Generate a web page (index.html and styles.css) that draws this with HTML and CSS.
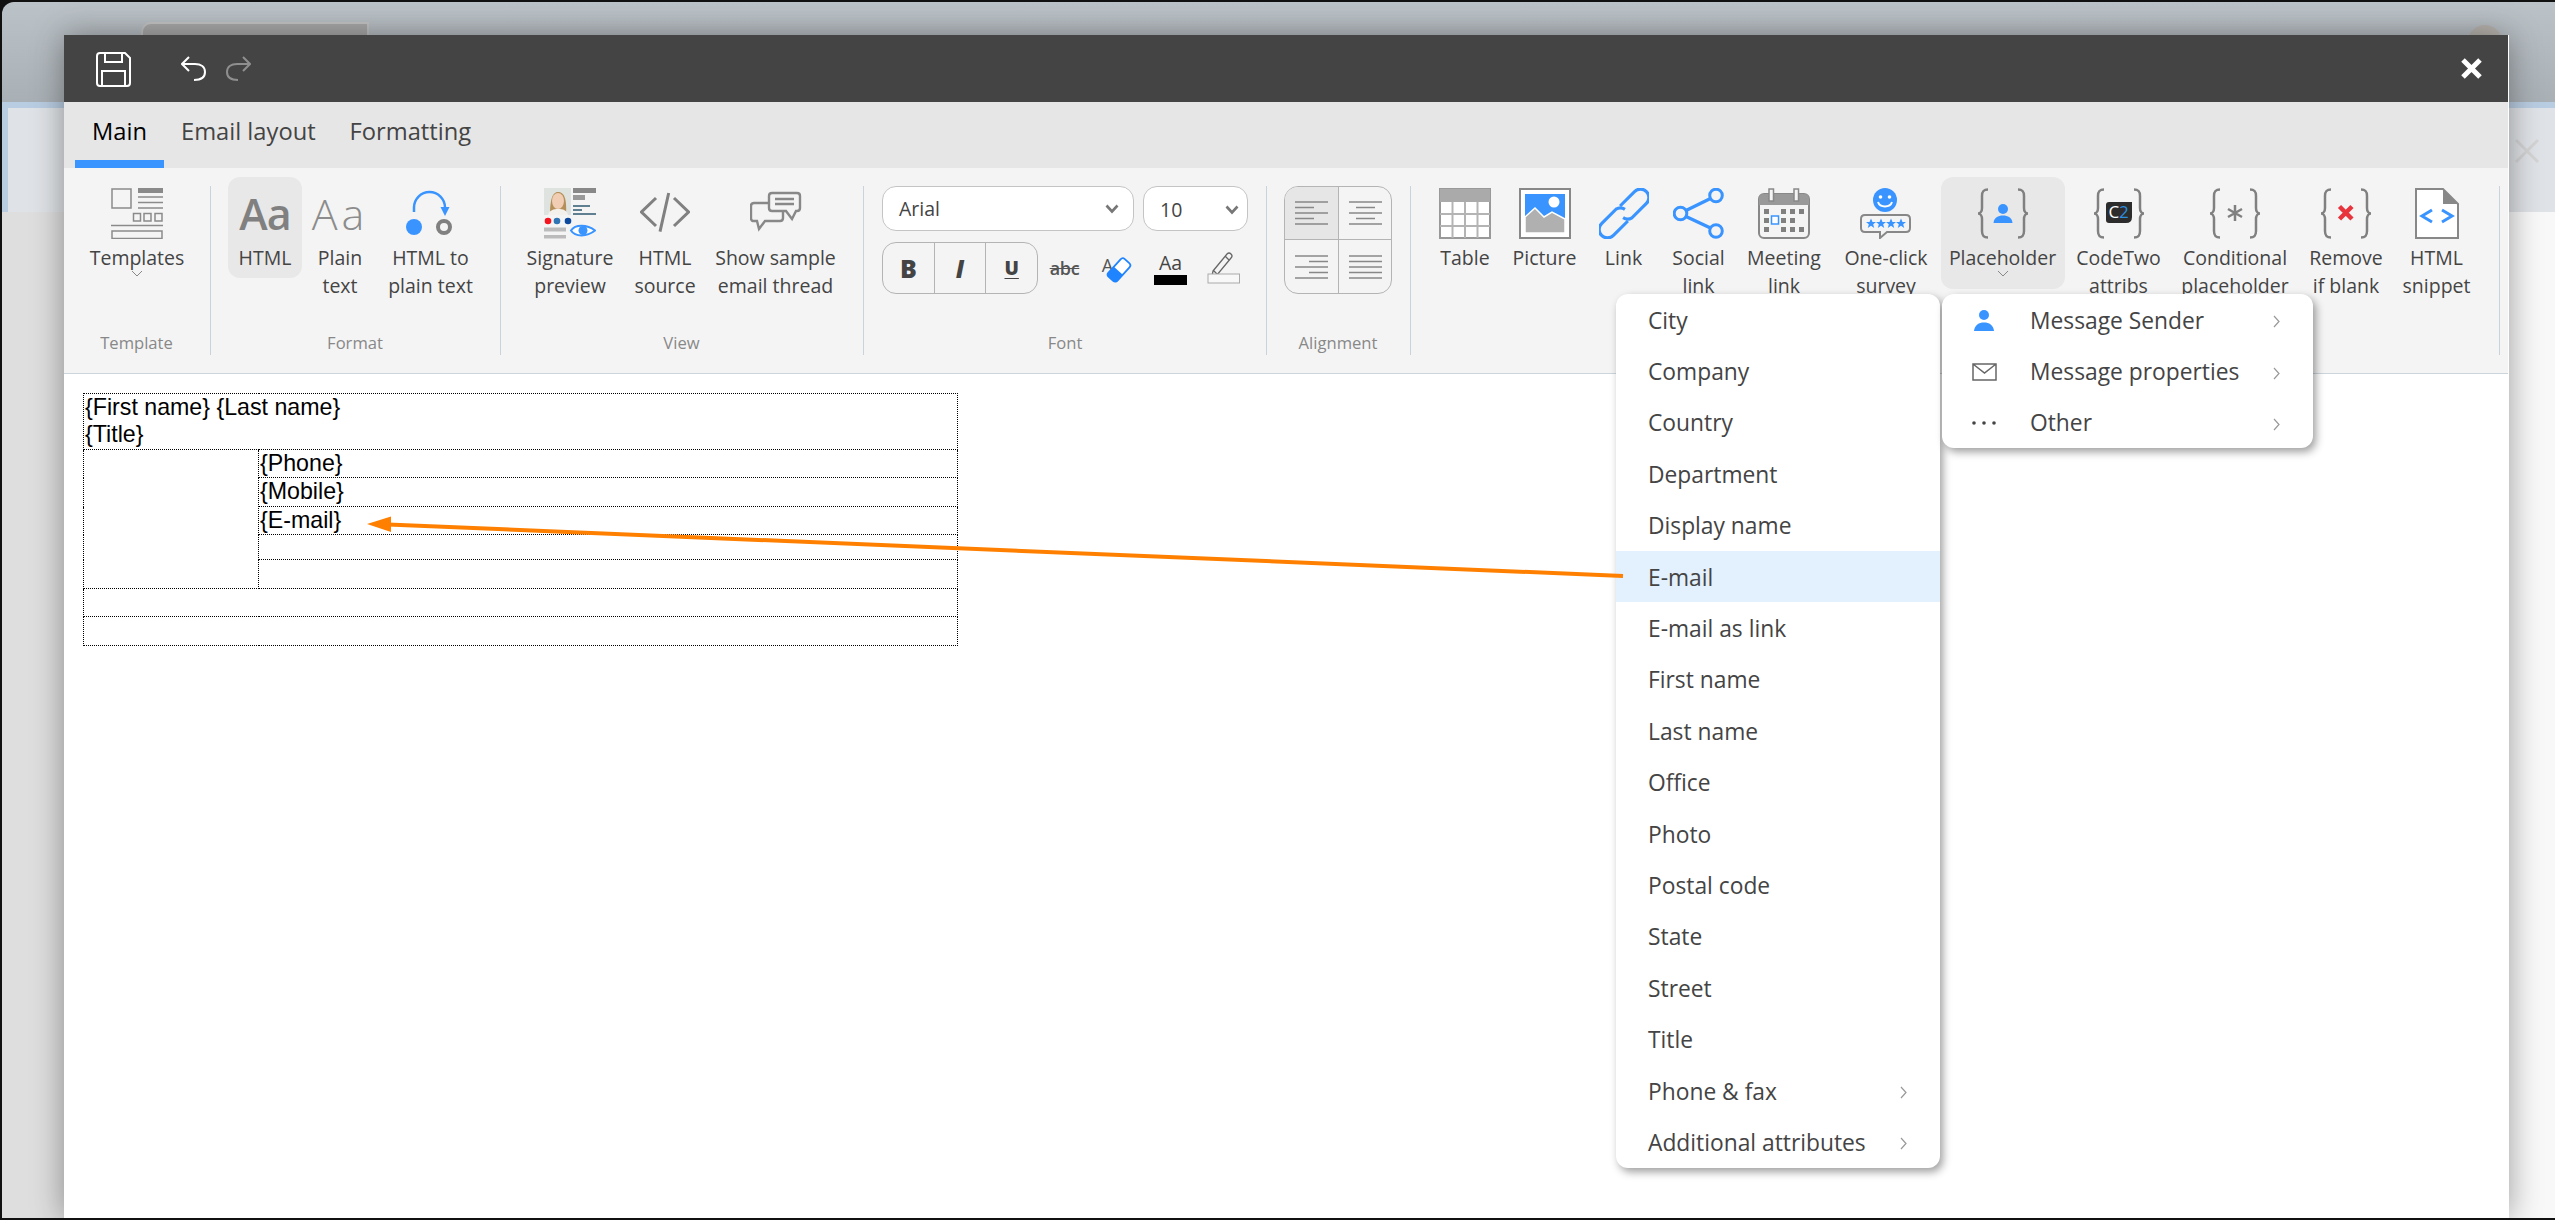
FILE: index.html
```html
<!DOCTYPE html>
<html lang="en">
<head>
<meta charset="utf-8">
<title>Signature editor</title>
<link rel="stylesheet" href="styles.css">
</head>
<body>
<div class="desktop">
  <div class="bg-tab"></div>
  <div class="bg-avatar"></div>
  <svg class="bg-close" width="26" height="26" viewBox="0 0 26 26"><path d="M2 2L24 24M24 2L2 24"/></svg>
  <main class="dialog">
    <header class="titlebar">
      <svg class="ic-save" width="35" height="35" viewBox="0 0 35 35"><path class="st-white" d="M4 1H29L34 6V31Q34 34 31 34H4Q1 34 1 31V4Q1 1 4 1ZM9 1V10H26V1M6 34V19H29V34"/></svg>
      <svg class="ic-undo" width="25" height="25" viewBox="0 0 25 25"><path class="st-white" d="M8 1L1 8L8 15M1 8H14C20 8 24 11 24 16C24 21 20 24 13 24"/></svg>
      <svg class="ic-redo" width="25" height="25" viewBox="0 0 25 25"><path class="st-dim" d="M17 1L24 8L17 15M24 8H11C5 8 1 11 1 16C1 21 5 24 12 24"/></svg>
      <svg class="ic-close" width="21" height="21" viewBox="0 0 21 21"><path d="M2 2L19 19M19 2L2 19"/></svg>
    </header>
    <nav class="tabs">
      <div class="tab tab-active">Main</div>
      <div class="tab">Email layout</div>
      <div class="tab">Formatting</div>
    </nav>
    <section class="ribbon">
      <div class="group g-template">
        <div class="items">
          <div class="item w146">
            <svg class="icon" width="52" height="51" viewBox="0 0 52 51"><g class="gl"><rect x="1" y="1" width="19" height="19"/><path d="M27 9H52M27 14.500H52M27 20H52M0 37.500H52"/><rect x="22.500" y="25.500" width="7" height="7.500"/><rect x="33" y="25.500" width="7" height="7.500"/><rect x="44" y="25.500" width="7" height="7.500"/><rect x="1" y="43" width="50" height="7.500"/></g><rect x="27" y="0" width="25" height="5" class="fl"/></svg>
            <div class="lbl">Templates</div>
            <svg class="chev" width="12" height="7" viewBox="0 0 12 7"><path d="M1 1L6 6L11 1"/></svg>
          </div>
        </div>
        <div class="gname">Template</div>
      </div>
      <div class="group g-format">
        <div class="items">
          <div class="item w74 active h-html"><div class="icon aa aa-bold">Aa</div><div class="lbl">HTML</div></div>
          <div class="item w76"><div class="icon aa aa-thin">Aa</div><div class="lbl">Plain<br>text</div></div>
          <div class="item w105">
            <svg class="icon" width="50" height="51" viewBox="0 0 50 51"><path class="st-blue" d="M8 24V19.500A15.500 15.500 0 0 1 39 19.500V22"/><path class="fb" d="M34.500 19H43.500L39 28Z"/><circle class="fb" cx="8" cy="39" r="8"/><circle class="ring" cx="38" cy="39" r="6"/></svg>
            <div class="lbl">HTML to<br>plain text</div>
          </div>
        </div>
        <div class="gname">Format</div>
      </div>
      <div class="group g-view">
        <div class="items">
          <div class="item w104">
            <svg class="icon" width="52" height="51" viewBox="0 0 52 51">
              <rect x="0" y="0" width="27" height="27" fill="#dfe3df"/>
              <path d="M6 27C6 10 9 4 14 4C20 4 23 10 22 27Z" fill="#b48f58"/>
              <ellipse cx="14" cy="13" rx="6" ry="8" fill="#f1cdb3"/>
              <path d="M4 27C5 22 10 21 14 21C19 21 23 22 24 27Z" fill="#f4f0ec"/>
              <rect x="29" y="0" width="23" height="5" fill="#888"/>
              <rect x="29" y="7" width="12" height="5" fill="#999"/>
              <path d="M29 18H46M29 22H38M29 26H52" stroke="#2d5a70" stroke-width="1.500"/>
              <circle cx="4" cy="33" r="3.300" fill="#f5141e"/><circle cx="13" cy="33" r="3.300" fill="#2f74b5"/><circle cx="24" cy="33" r="3.300" fill="#0d4a9e"/>
              <rect x="0" y="39.500" width="22" height="4" fill="#bbb"/><rect x="0" y="47" width="22" height="3.500" fill="#bbb"/>
              <path d="M27 42.500C31 36 43 36 51 42.500C43 49 31 49 27 42.500Z" fill="#fff" stroke="#3a94ff" stroke-width="2"/>
              <circle cx="39" cy="42.500" r="4.500" fill="#3a94ff"/>
            </svg>
            <div class="lbl">Signature<br>preview</div>
          </div>
          <div class="item w86">
            <svg class="icon" width="50" height="51" viewBox="0 0 50 51"><path class="st-g3" d="M16 10L1.500 24L16 38M34 10L48.500 24L34 38M28.700 5L20 43.700"/></svg>
            <div class="lbl">HTML<br>source</div>
          </div>
          <div class="item w135">
            <svg class="icon" width="52" height="51" viewBox="0 0 52 51"><path class="st-g2" d="M4 15H30Q33 15 33 18V30Q33 33 30 33H15L9 41L7 33H4Q1 33 1 30V18Q1 15 4 15Z"/><path class="bubble" d="M22 5H47Q50 5 50 8V20Q50 23 47 23H46L42 31L36 23H22Q19 23 19 20V8Q19 5 22 5Z"/><path class="st-g2" d="M25 11H44M25 16H44"/></svg>
            <div class="lbl">Show sample<br>email thread</div>
          </div>
        </div>
        <div class="gname">View</div>
      </div>
      <div class="group g-font">
        <div class="font-rows">
          <div class="font-row1">
            <div class="sel sel-font"><span>Arial</span><svg width="14" height="10" viewBox="0 0 14 10"><path d="M1.500 1.500L7 7.500L12.500 1.500"/></svg></div>
            <div class="sel sel-size"><span>10</span><svg width="14" height="10" viewBox="0 0 14 10"><path d="M1.500 1.500L7 7.500L12.500 1.500"/></svg></div>
          </div>
          <div class="font-row2">
            <div class="biu">
              <div class="biu-c biu-b">B</div>
              <div class="biu-c biu-i">I</div>
              <div class="biu-c biu-u">U</div>
            </div>
            <div class="tool"><span class="abc">abc</span></div>
            <div class="tool tool-a">
              <span class="a-small">A</span>
              <svg width="28" height="28" viewBox="0 0 28 28"><g transform="rotate(-48 14 14)"><rect x="2" y="8" width="24" height="12" rx="3" fill="#fff" stroke="#1f84ff" stroke-width="1.800"/><path d="M5 8H13V20H5Q2 20 2 17V11Q2 8 5 8Z" fill="#1f84ff"/></g></svg>
            </div>
            <div class="tool tool-stack"><span class="aa-color">Aa</span><span class="bar-black"></span></div>
            <div class="tool">
              <svg width="34" height="32" viewBox="0 0 34 32"><path class="pen" d="M6 19L20 2Q22 0 24 2Q26 4 24 6L10 23L5 24Z M18 4L22 8M7 19L10 22"/><rect class="pen-box" x="1" y="22" width="31.500" height="9"/></svg>
            </div>
          </div>
        </div>
        <div class="gname">Font</div>
      </div>
      <div class="group g-align">
        <div class="align-grid">
          <div class="align-c align-on"><svg width="33" height="24" viewBox="0 0 33 24"><path d="M0 1H33M0 6.500H19M0 12H33M0 17.500H19M0 23H33"/></svg></div>
          <div class="align-c"><svg width="33" height="24" viewBox="0 0 33 24"><path d="M0 1H33M7 6.500H26M0 12H33M7 17.500H26M0 23H33"/></svg></div>
          <div class="align-c"><svg width="33" height="24" viewBox="0 0 33 24"><path d="M0 1H33M14 6.500H33M0 12H33M14 17.500H33M0 23H33"/></svg></div>
          <div class="align-c"><svg width="33" height="24" viewBox="0 0 33 24"><path d="M0 1H33M0 6.500H33M0 12H33M0 17.500H33M0 23H33"/></svg></div>
        </div>
        <div class="gname">Alignment</div>
      </div>
      <div class="group g-insert">
        <div class="items">
          <div class="item w80">
            <svg class="icon" width="52" height="51" viewBox="0 0 52 51"><rect x="1" y="1" width="50" height="49" fill="#fff" stroke="#999" stroke-width="2"/><rect x="1" y="1" width="50" height="13" fill="#aaa"/><path d="M13.500 14V50M26 14V50M38.500 14V50M1 26H51M1 38H51" stroke="#b4b4b4" stroke-width="2"/></svg>
            <div class="lbl">Table</div>
          </div>
          <div class="item w79">
            <svg class="icon" width="52" height="51" viewBox="0 0 52 51"><rect x="1" y="1" width="50" height="49" fill="#fff" stroke="#888" stroke-width="2"/><rect x="6" y="6" width="40" height="39" fill="#3a94ff"/><path d="M6 45V29L16 20L25 29L33 24L46 31V45Z" fill="#b0b0b0" stroke="#fff" stroke-width="1.500"/><circle cx="35" cy="14" r="5.500" fill="#fff"/></svg>
            <div class="lbl">Picture</div>
          </div>
          <div class="item w79">
            <svg class="icon" width="50" height="51" viewBox="-2 -2 54 55"><path class="st-link" d="M20.800 17.400L36.400 1.800A9 9 0 0 1 49.200 14.600L33.600 30.200A9 9 0 0 1 24 30"/><path class="st-link" d="M29.200 33.600L13.600 49.200A9 9 0 0 1 .8 36.400L16.400 20.800A9 9 0 0 1 26 21"/></svg>
            <div class="lbl">Link</div>
          </div>
          <div class="item w71">
            <svg class="icon" width="51" height="51" viewBox="0 0 51 51"><path class="st-link" d="M13 22.500L37.500 10.500M13 28.500L37.500 40"/><circle class="ring-b" cx="43" cy="7.500" r="6.300"/><circle class="ring-b" cx="7.500" cy="25.500" r="6.300"/><circle class="ring-b" cx="43" cy="43" r="6.300"/></svg>
            <div class="lbl">Social<br>link</div>
          </div>
          <div class="item w100">
            <svg class="icon" width="52" height="51" viewBox="0 0 52 51"><rect x="1" y="6" width="50" height="44" rx="5" fill="#f4f4f4" stroke="#888" stroke-width="2"/><path d="M6 6H46Q51 6 51 11V17H1V11Q1 6 6 6Z" fill="#999"/><rect x="11" y="1" width="4.500" height="12" fill="#f4f4f4" stroke="#888" stroke-width="1.500"/><rect x="36" y="1" width="4.500" height="12" fill="#f4f4f4" stroke="#888" stroke-width="1.500"/><g class="fg"><rect x="6" y="21" width="5" height="5"/><rect x="23" y="21" width="5" height="5"/><rect x="32" y="21" width="5" height="5"/><rect x="41" y="21" width="5" height="5"/><rect x="6" y="30" width="5" height="5"/><rect x="23" y="30" width="5" height="5"/><rect x="32" y="30" width="5" height="5"/><rect x="6" y="39" width="5" height="5"/><rect x="23" y="39" width="5" height="5"/><rect x="32" y="39" width="5" height="5"/><rect x="41" y="39" width="5" height="5"/></g><rect x="13.500" y="28" width="7" height="8" fill="#fff" stroke="#3a94ff" stroke-width="1.500"/></svg>
            <div class="lbl">Meeting<br>link</div>
          </div>
          <div class="item w104">
            <svg class="icon" width="52" height="51" viewBox="0 0 52 51"><circle cx="25" cy="12" r="12" fill="#3a94ff"/><circle cx="20.500" cy="9" r="1.800" fill="#fff"/><circle cx="29.500" cy="9" r="1.800" fill="#fff"/><path d="M18 14C20 20 30 20 32 14" fill="none" stroke="#fff" stroke-width="2"/><path d="M5 27H46Q50 27 50 31V40Q50 44 46 44H27L20 50V44H5Q1 44 1 40V31Q1 27 5 27Z" fill="#f4f4f4" stroke="#888" stroke-width="2"/><path class="fb" d="M11 30.500L12.500 34H16L13.200 36.200L14.200 40L11 37.800L7.800 40L8.800 36.200L6 34H9.500Z"/><path class="fb" d="M21 30.500L22.500 34H26L23.200 36.200L24.200 40L21 37.800L17.800 40L18.800 36.200L16 34H19.500Z"/><path class="fb" d="M31 30.500L32.500 34H36L33.200 36.200L34.200 40L31 37.800L27.800 40L28.800 36.200L26 34H29.500Z"/><path class="fb" d="M41 30.500L42.500 34H46L43.200 36.200L44.200 40L41 37.800L37.800 40L38.800 36.200L36 34H39.500Z"/></svg>
            <div class="lbl">One-click<br>survey</div>
          </div>
          <div class="item w124 active h-ph">
            <svg class="icon" width="52" height="51" viewBox="0 0 52 51"><path class="st-brace" d="M11 1.500C6 1.500 5 4 5 8V20C5 23 3.500 25.500 1 25.500C3.500 25.500 5 28 5 31V43C5 47 6 49.500 11 49.500M41 1.500C46 1.500 47 4 47 8V20C47 23 48.500 25.500 51 25.500C48.500 25.500 47 28 47 31V43C47 47 46 49.500 41 49.500"/><circle class="fb" cx="26" cy="21" r="5"/><path class="fb" d="M16.500 35C17 29.500 21 27.500 26 27.500C31 27.500 35 29.500 35.500 35Z"/></svg>
            <div class="lbl">Placeholder</div>
            <svg class="chev" width="12" height="7" viewBox="0 0 12 7"><path d="M1 1L6 6L11 1"/></svg>
          </div>
          <div class="item w108">
            <svg class="icon" width="52" height="51" viewBox="0 0 52 51"><path class="st-brace" d="M11 1.500C6 1.500 5 4 5 8V20C5 23 3.500 25.500 1 25.500C3.500 25.500 5 28 5 31V43C5 47 6 49.500 11 49.500M41 1.500C46 1.500 47 4 47 8V20C47 23 48.500 25.500 51 25.500C48.500 25.500 47 28 47 31V43C47 47 46 49.500 41 49.500"/><path d="M16 14H39V29Q39 35 33 35H16Q13 35 13 32V17Q13 14 16 14Z" fill="#2c2c2c"/><text x="15.500" y="30" class="c2-c">C</text><text x="26" y="30" class="c2-2">2</text></svg>
            <div class="lbl">CodeTwo<br>attribs</div>
          </div>
          <div class="item w125">
            <svg class="icon" width="52" height="51" viewBox="0 0 52 51"><path class="st-brace" d="M11 1.500C6 1.500 5 4 5 8V20C5 23 3.500 25.500 1 25.500C3.500 25.500 5 28 5 31V43C5 47 6 49.500 11 49.500M41 1.500C46 1.500 47 4 47 8V20C47 23 48.500 25.500 51 25.500C48.500 25.500 47 28 47 31V43C47 47 46 49.500 41 49.500"/><path class="st-brace" d="M26 17V33M19 21L33 29M33 21L19 29"/></svg>
            <div class="lbl">Conditional<br>placeholder</div>
          </div>
          <div class="item w97">
            <svg class="icon" width="52" height="51" viewBox="0 0 52 51"><path class="st-brace" d="M11 1.500C6 1.500 5 4 5 8V20C5 23 3.500 25.500 1 25.500C3.500 25.500 5 28 5 31V43C5 47 6 49.500 11 49.500M41 1.500C46 1.500 47 4 47 8V20C47 23 48.500 25.500 51 25.500C48.500 25.500 47 28 47 31V43C47 47 46 49.500 41 49.500"/><path class="st-red" d="M19.500 18.500L32 31M32 18.500L19.500 31"/></svg>
            <div class="lbl">Remove<br>if blank</div>
          </div>
          <div class="item w84">
            <svg class="icon" width="44" height="51" viewBox="0 0 44 51"><path d="M1 1H28L43 16V50H1Z" fill="#fff" stroke="#888" stroke-width="2"/><path d="M28 1L43 16H28Z" fill="#888"/><path class="st-blue3" d="M17 22L7 28L17 34M27 22L37 28L27 34"/></svg>
            <div class="lbl">HTML<br>snippet</div>
          </div>
        </div>
      </div>
    </section>
    <section class="canvas">
      <table class="sig">
        <colgroup><col class="col-l"><col class="col-r"></colgroup>
        <tr class="r56"><td colspan="2">{First name} {Last name}<br>{Title}</td></tr>
        <tr class="r28"><td rowspan="5"></td><td>{Phone}</td></tr>
        <tr class="r29"><td>{Mobile}</td></tr>
        <tr class="r28"><td>{E-mail}</td></tr>
        <tr class="r25"><td></td></tr>
        <tr class="r29"><td></td></tr>
        <tr class="r28"><td colspan="2"></td></tr>
        <tr class="r29"><td colspan="2"></td></tr>
      </table>
    </section>
  </main>
</div>

<div class="menu menu-attrs">
  <div class="mi">City</div>
  <div class="mi">Company</div>
  <div class="mi">Country</div>
  <div class="mi">Department</div>
  <div class="mi">Display name</div>
  <div class="mi mi-on">E-mail</div>
  <div class="mi">E-mail as link</div>
  <div class="mi">First name</div>
  <div class="mi">Last name</div>
  <div class="mi">Office</div>
  <div class="mi">Photo</div>
  <div class="mi">Postal code</div>
  <div class="mi">State</div>
  <div class="mi">Street</div>
  <div class="mi">Title</div>
  <div class="mi">Phone &amp; fax<svg class="mi-arrow" width="7" height="13" viewBox="0 0 7 13"><path d="M1 1L6 6.500L1 12"/></svg></div>
  <div class="mi">Additional attributes<svg class="mi-arrow" width="7" height="13" viewBox="0 0 7 13"><path d="M1 1L6 6.500L1 12"/></svg></div>
</div>

<div class="menu menu-root">
  <div class="mi mi-icon">
    <span class="mi-ic"><svg width="22" height="22" viewBox="0 0 22 22"><circle class="fb" cx="11" cy="6" r="5"/><path class="fb" d="M1 22C1.500 16 6 13.500 11 13.500C16 13.500 20.500 16 21 22Z"/></svg></span>
    Message Sender<svg class="mi-arrow" width="7" height="13" viewBox="0 0 7 13"><path d="M1 1L6 6.500L1 12"/></svg>
  </div>
  <div class="mi mi-icon">
    <span class="mi-ic"><svg width="25" height="18" viewBox="0 0 25 18"><path class="mail" d="M1 1H24V17H1ZM1 1L12.500 10L24 1"/></svg></span>
    Message properties<svg class="mi-arrow" width="7" height="13" viewBox="0 0 7 13"><path d="M1 1L6 6.500L1 12"/></svg>
  </div>
  <div class="mi mi-icon">
    <span class="mi-ic"><svg width="24" height="4" viewBox="0 0 24 4"><circle cx="2" cy="2" r="1.800" fill="#444"/><circle cx="12" cy="2" r="1.800" fill="#444"/><circle cx="22" cy="2" r="1.800" fill="#444"/></svg></span>
    Other<svg class="mi-arrow" width="7" height="13" viewBox="0 0 7 13"><path d="M1 1L6 6.500L1 12"/></svg>
  </div>
</div>

<svg class="arrow" width="2555" height="1220" viewBox="0 0 2555 1220"><path d="M1623 576L388 524.500" stroke="#ff8000" stroke-width="4" fill="none"/><path d="M367 524L391 516.500V532Z" fill="#ff8000"/></svg>
</body>
</html>
```
FILE: styles.css
```css
* { box-sizing: border-box; }
html, body { margin: 0; padding: 0; }
body {
  position: relative;
  width: 2555px;
  height: 1220px;
  overflow: hidden;
  background: #111;
  font-family: "Open Sans", "Noto Sans", sans-serif;
  color: #444;
}

/* backdrop */
.desktop {
  position: relative;
  margin: 2px 0 0 2px;
  height: 1216px;
  display: flex;
  padding: 33px 46px 0 62px;
  border-radius: 12px 0 0 0;
  overflow: hidden;
  background:
    linear-gradient(#bcc3c8, #a9b0b5) 0 0 / 100% 100px no-repeat,
    linear-gradient(#b9cde2, #b9cde2) 0 100px / 100% 6px no-repeat,
    linear-gradient(90deg, #b9cde2 0 6px, #dfe2e6 6px) 0 106px / 100% 104px no-repeat,
    linear-gradient(90deg, #dedede 0 1280px, #f8f8f8 1280px);
}
.bg-tab {
  position: absolute;
  left: 139px;
  top: 20px;
  width: 228px;
  height: 30px;
  background: #a9a9a9;
  border: 2px solid #c4c4c4;
  border-radius: 10px 0 0 0;
}
.bg-avatar {
  position: absolute;
  left: 2466px;
  top: 23px;
  width: 34px;
  height: 34px;
  border-radius: 50%;
  background: #b8b3ae;
}
.bg-close {
  position: absolute;
  left: 2512px;
  top: 136px;
}
.bg-close path { stroke: #d4d4d4; stroke-width: 3; fill: none; }

/* dialog */
.dialog {
  flex: 1;
  min-width: 0;
  display: flex;
  flex-direction: column;
  background: #fff;
  border-right: 1px solid #fff;
  box-shadow: 0 0 30px rgba(0, 0, 0, .38);
  position: relative;
}
.titlebar {
  height: 67px;
  flex: none;
  display: flex;
  align-items: center;
  background: #444;
  padding: 0 26px 0 32px;
}
.titlebar svg { fill: none; }
.ic-save { margin-top: 2px; }
.ic-undo { margin-left: 50px; margin-top: -1px; }
.ic-redo { margin-left: 20px; margin-top: -1px; }
.ic-close { margin-left: auto; }
.ic-close path { stroke: #fff; stroke-width: 5; }
.st-white { stroke: #fff; stroke-width: 2; fill: none; }
.st-dim { stroke: #8f8f8f; stroke-width: 2; fill: none; }

.tabs {
  height: 66px;
  flex: none;
  display: flex;
  background: #e6e6e6;
  padding-left: 11px;
}
.tab {
  padding: 0 17px;
  display: flex;
  align-items: center;
  justify-content: center;
  border-bottom: 8px solid transparent;
  font-size: 23.700px;
  color: #444;
  line-height: 30px;
}
.tab-active {
  width: 89px;
  padding: 0;
  color: #000;
  font-weight: 500;
  border-bottom-color: #3a94ff;
}

/* ribbon */
.ribbon {
  height: 206px;
  flex: none;
  display: flex;
  align-items: flex-start;
  padding-top: 18px;
  background: #f4f4f4;
  border-bottom: 1px solid #cdd5dc;
}
.group {
  height: 169px;
  flex: none;
  display: flex;
  flex-direction: column;
  border-right: 1px solid #c8d3dc;
}
.g-template { width: 147px; }
.g-format { width: 290px; padding-left: 17px; }
.g-view { width: 363px; padding-left: 17px; }
.g-font { width: 403px; padding-left: 18px; }
.g-align { width: 144px; padding-left: 17px; }
.g-insert { width: 1089px; padding-left: 14px; }
.gname {
  margin-top: auto;
  height: 24px;
  line-height: 24px;
  font-size: 16.600px;
  color: #888;
  text-align: center;
  padding-right: 1px;
}
.g-format .gname, .g-view .gname, .g-font .gname, .g-align .gname { margin-left: -17px; }
.items {
  display: flex;
  align-items: flex-start;
  margin-top: -9px;
}
.item {
  flex: none;
  display: flex;
  flex-direction: column;
  align-items: center;
  padding-top: 11px;
  white-space: nowrap;
  text-align: center;
}
.w146 { width: 146px; }
.w74 { width: 74px; }
.w76 { width: 76px; }
.w79 { width: 79px; }
.w80 { width: 80px; }
.w71 { width: 71px; }
.w84 { width: 84px; }
.w86 { width: 86px; }
.w97 { width: 97px; }
.w100 { width: 100px; }
.w104 { width: 104px; }
.w105 { width: 105px; }
.w108 { width: 108px; }
.w124 { width: 124px; }
.w125 { width: 125px; }
.w135 { width: 135px; }
.active { background: #e8e8e8; border-radius: 12px; }
.h-html { height: 101px; }
.h-ph { height: 112px; margin-left: 2.500px; }
.icon { height: 51px; flex: none; margin-bottom: 5px; display: block; }
.lbl {
  font-size: 19.500px;
  line-height: 28px;
  color: #444;
}
.chev { margin-top: -2px; fill: none; stroke: #888; stroke-width: 1; display: block; }
.aa {
  line-height: 51px;
  font-size: 43px;
  color: #808080;
  letter-spacing: -1px;
}
.aa-bold { font-weight: 600; }
.aa-thin { font-weight: 300; color: #8c8c8c; letter-spacing: 4px; }
.gl { fill: none; stroke: #8a8a8a; stroke-width: 1.500; }
.fl { fill: #8a8a8a; }
.fb { fill: #3a94ff; }
.fg { fill: #808080; }
.st-blue { stroke: #3a94ff; stroke-width: 2.500; fill: none; }
.st-blue3 { stroke: #3a94ff; stroke-width: 3; fill: none; }
.st-g3 { stroke: #808080; stroke-width: 3; fill: none; }
.st-g2 { stroke: #888; stroke-width: 2.400; fill: none; }
.bubble { stroke: #888; stroke-width: 2.400; fill: #f4f4f4; }
.ring { stroke: #808080; stroke-width: 4; fill: none; }
.ring-b { stroke: #3a94ff; stroke-width: 3; fill: #f4f4f4; }
.st-link { stroke: #3a94ff; stroke-width: 3.400; fill: none; }
.st-brace { stroke: #808080; stroke-width: 2.500; fill: none; }
.st-red { stroke: #e8343c; stroke-width: 4.500; fill: none; }
.c2-c { font-family: "Open Sans", sans-serif; font-size: 17px; fill: #fff; }
.c2-2 { font-family: "Open Sans", sans-serif; font-size: 17px; fill: #2a8fe0; }

/* font group */
.font-rows { display: flex; flex-direction: column; gap: 11px; }
.font-row1 { display: flex; gap: 9px; height: 45px; }
.sel {
  display: flex;
  align-items: center;
  justify-content: space-between;
  height: 45px;
  background: #fff;
  border: 1px solid #c4c4c4;
  border-radius: 14px;
  font-size: 19.500px;
  color: #444;
}
.sel svg { fill: none; stroke: #777; stroke-width: 2.600; }
.sel-font { width: 252px; padding: 0 14px 0 16px; }
.sel-size { width: 105px; padding: 2px 8px 0 16px; }
.font-row2 { display: flex; height: 52px; }
.biu {
  width: 156px;
  display: flex;
  border: 1px solid #b4b4b4;
  border-radius: 14px;
  flex: none;
}
.biu-c {
  flex: 1;
  display: flex;
  align-items: center;
  justify-content: center;
  border-left: 1px solid #b4b4b4;
  color: #444;
}
.biu-c:first-child { border-left: 0; }
.biu-b { font-size: 25px; font-weight: 800; }
.biu-i { font-size: 24px; font-weight: 800; font-style: italic; }
.biu-u { font-size: 19px; font-weight: 800; text-decoration: underline; text-underline-offset: 3px; }
.tool {
  width: 53px;
  flex: none;
  display: flex;
  align-items: center;
  justify-content: center;
}
.abc { font-size: 18px; color: #555; text-decoration: line-through; font-weight: 600; letter-spacing: -.3px; }
.tool-a { align-items: flex-start; padding-top: 11px; }
.a-small { font-size: 18px; line-height: 24px; color: #555; margin-right: -8px; }
.tool-a svg { margin-top: 3px; }
.tool-stack { flex-direction: column; justify-content: flex-start; padding-top: 9px; }
.aa-color { font-size: 19.500px; line-height: 24px; color: #444; }
.bar-black { width: 33px; height: 10px; background: #000; }
.pen { fill: none; stroke: #666; stroke-width: 1.300; }
.pen-box { fill: #f8f8f8; stroke: #aaa; stroke-width: 1; }

/* alignment */
.align-grid {
  width: 108px;
  height: 108px;
  display: grid;
  grid-template-columns: 54px 1fr;
  grid-template-rows: 53px 1fr;
  border: 1px solid #b4b4b4;
  border-radius: 14px;
  overflow: hidden;
}
.align-c {
  display: flex;
  align-items: center;
  justify-content: center;
  border-right: 1px solid #b4b4b4;
  border-bottom: 1px solid #b4b4b4;
}
.align-c:nth-child(2n) { border-right: 0; }
.align-c:nth-child(n+3) { border-bottom: 0; }
.align-on { background: #e6e6e6; }
.align-c svg { fill: none; stroke: #888; stroke-width: 1.700; }

/* canvas */
.canvas {
  flex: 1;
  padding: 19px 0 0 19px;
  background: #fff;
}
.sig {
  border-collapse: collapse;
  table-layout: fixed;
  width: 874px;
  font-family: "Liberation Sans", Arial, sans-serif;
  font-size: 23.200px;
  line-height: 27px;
  color: #000;
}
.sig td {
  border: 1px dotted #000;
  padding: 0 1px;
  vertical-align: top;
}
.col-l { width: 175px; }
.col-r { width: 699px; }
.r56 { height: 56px; }
.r28 { height: 28px; }
.r29 { height: 29px; }
.r25 { height: 25px; }

/* menus */
.menu {
  position: absolute;
  top: 294px;
  background: #fff;
  border-radius: 12px;
  overflow: hidden;
  box-shadow: 3px 4px 8px rgba(0, 0, 0, .38);
  font-size: 22.800px;
  color: #444;
}
.menu-attrs { left: 1616px; width: 324px; }
.menu-root { left: 1942px; width: 371px; }
.mi {
  height: 51.400px;
  display: flex;
  align-items: center;
  padding: 1px 0 0 32px;
  position: relative;
  white-space: nowrap;
}
.mi-on { background: #e3f0fe; }
.mi-icon { padding-left: 0; }
.mi-ic {
  width: 88px;
  padding-right: 4px;
  display: flex;
  justify-content: center;
  flex: none;
}
.mi-arrow { margin-left: auto; margin-right: 33px; fill: none; stroke: #999; stroke-width: 1.200; flex: none; margin-top: 3px; }
.mail { fill: none; stroke: #666; stroke-width: 1.500; }

.arrow { position: absolute; left: 0; top: 0; pointer-events: none; }
```
